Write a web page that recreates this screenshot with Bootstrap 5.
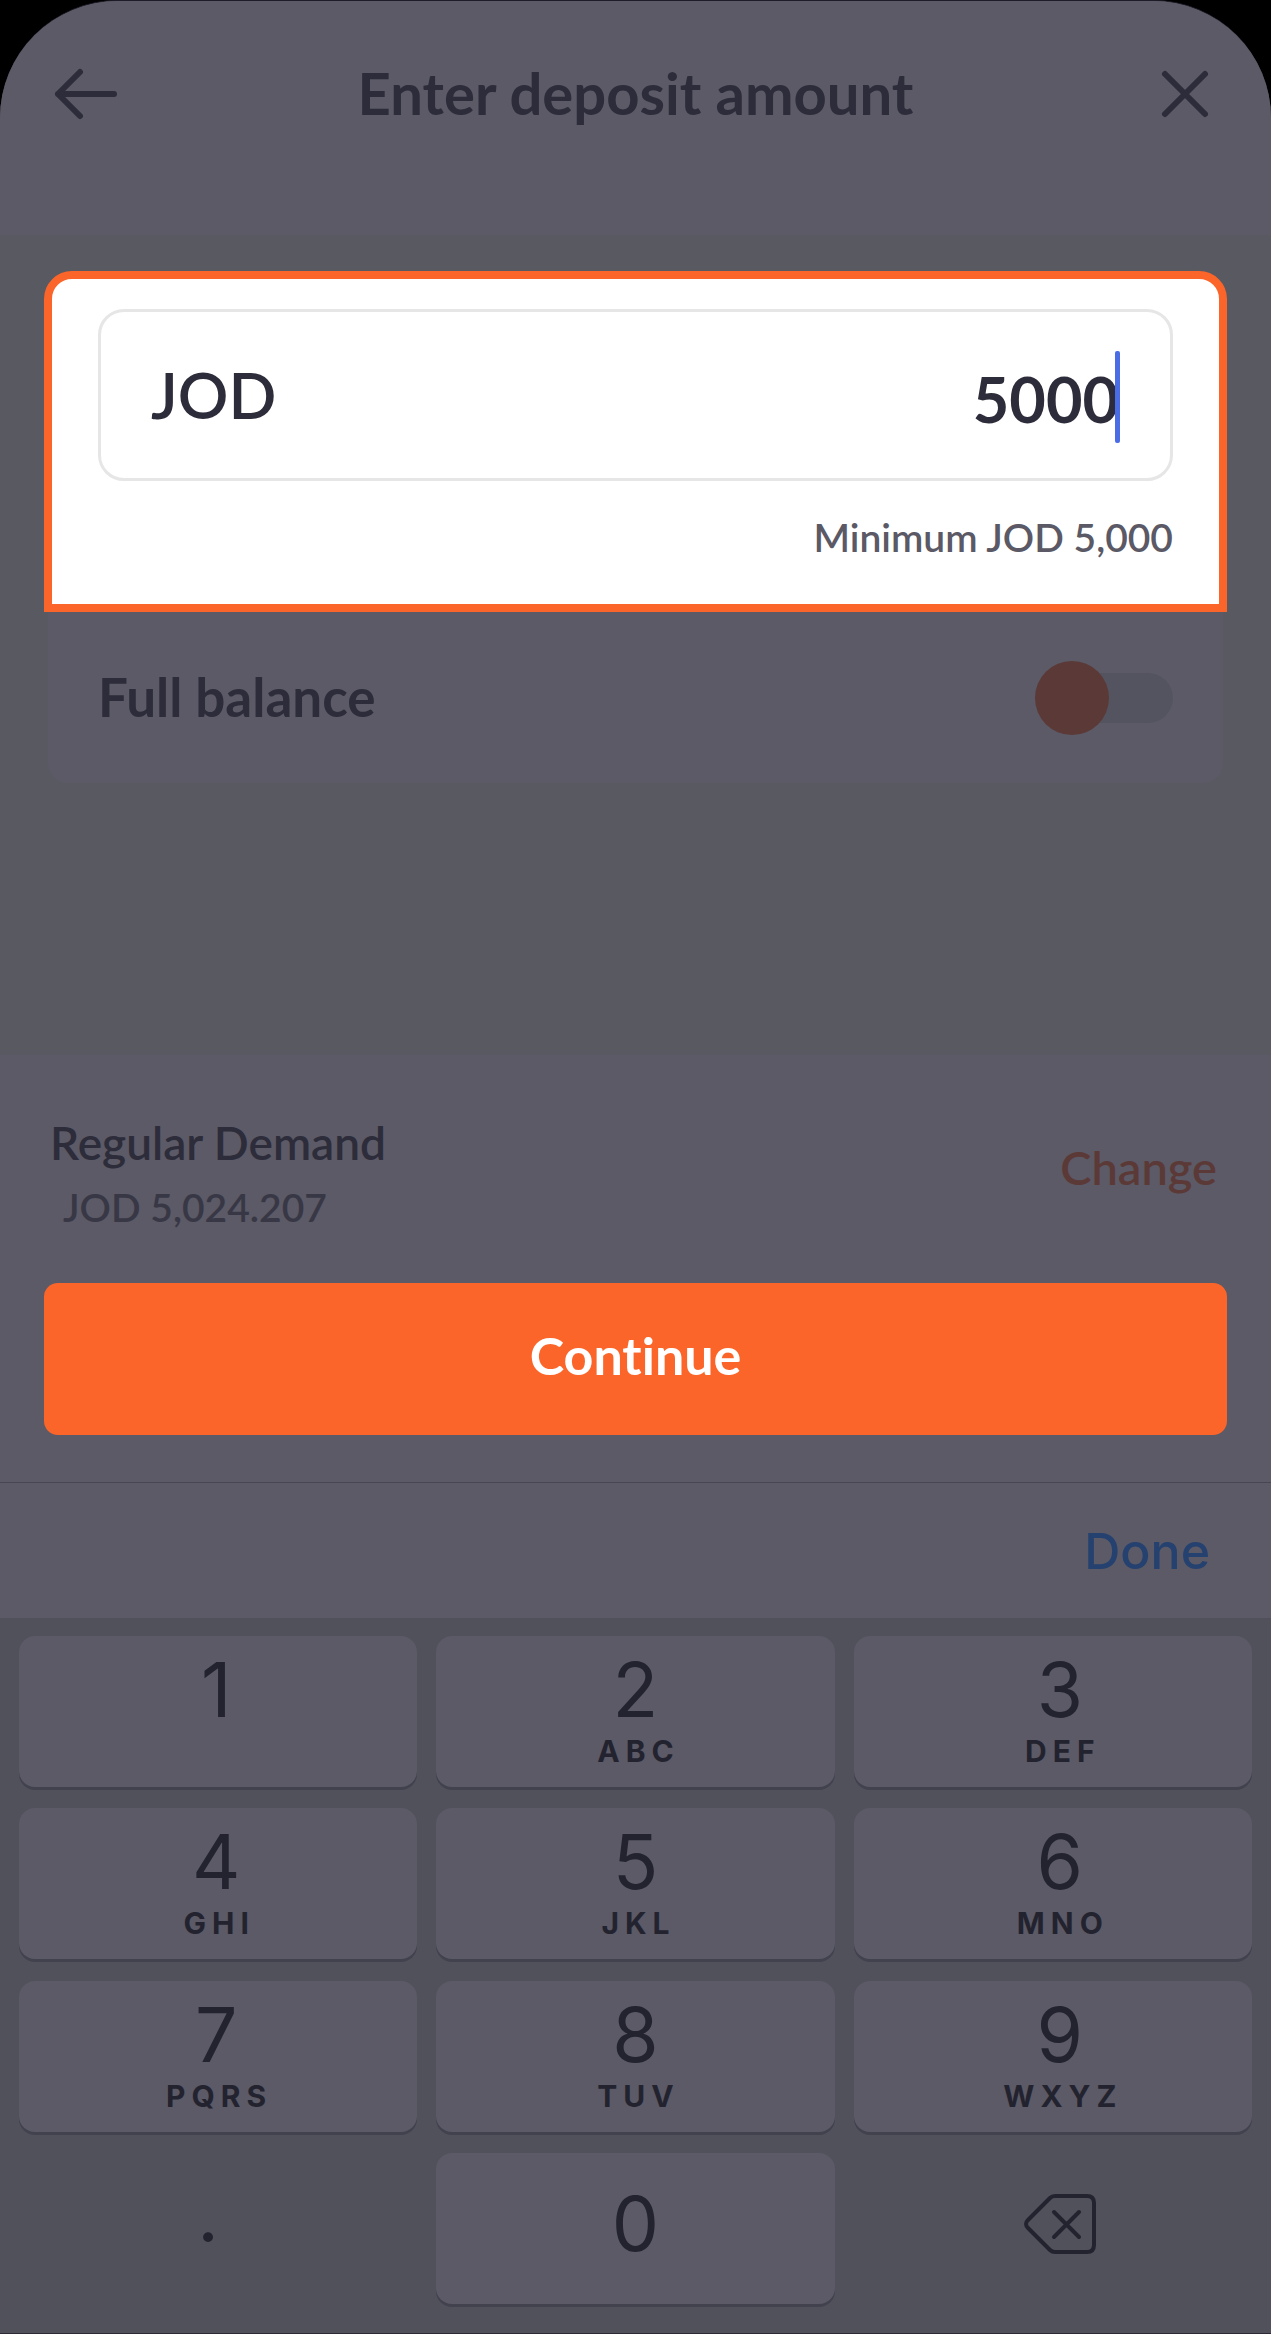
<!DOCTYPE html>
<html lang="en">
<head>
<meta charset="utf-8">
<meta name="viewport" content="width=device-width, initial-scale=1">
<title>Enter deposit amount</title>
<link href="https://cdn.jsdelivr.net/npm/bootstrap@5.3.0/dist/css/bootstrap.min.css" rel="stylesheet">
<style>
  :root {
    --ink: #2d2c3a;
    --panel: #5b5a66;
    --backdrop: #595962;
    --accent: #fc6529;
    --accent-dim: #5b3937;
    --key-ink: #232330;
  }
  body { background: #000; color: var(--ink); font-family: Lato, "Open Sans", sans-serif; font-weight: 600; }
  body, button, input { font-variant-ligatures: none; }
  button, input { font-weight: inherit; }
  .screen { background: var(--backdrop); min-height: 100vh; border-top: 1px solid #1d1c28; border-bottom: 1px solid #2b2a36; border-radius: 118px 118px 0 0; overflow: hidden; }
  .top-bar { background: var(--panel); padding: 60px 54px 110px; }
  .top-title { font-size: 58px; line-height: 64px; font-weight: 700; }
  .icon-btn { width: 64px; height: 64px; color: var(--ink); }
  .icon-btn svg { display: block; }

  .amount-area { padding: 36px 44px 0; }
  .amount-panel { background: #fff; border: 8px solid var(--accent); border-radius: 28px 28px 0 0; padding: 30px 46px 41px; }
  .amount-box { border: 3px solid #e6e6e6; border-radius: 26px; height: 172px; padding: 0 50px; background: #fff; }
  .amount-box label { font-size: 63px; line-height: 80px; }
  .amount-box input { min-width: 0; font-size: 63px; line-height: 80px; height: 92px; color: var(--ink); outline: 0; padding: 6px 0 0; font-weight: 700; }
  .text-caret { width: 5px; height: 92px; margin-left: -4px; margin-top: 3px; border-radius: 2px; background: #4a6de5; z-index: 1; }
  .amount-hint { font-size: 39px; line-height: 48px; color: #5a5965; margin-top: 32px; padding-bottom: 2px; }

  .balance-row { background: var(--panel); border-radius: 0 0 20px 20px; margin: 0 4px; height: 171px; padding: 0 50px; }
  .balance-row label { font-size: 53px; line-height: 60px; font-weight: 700; padding-bottom: 2px; }
  .balance-switch { appearance: none; width: 138px; height: 74px; display: flex; align-items: center; }
  .balance-switch::before { content: ""; width: 74px; height: 74px; border-radius: 50%; background: var(--accent-dim); z-index: 1; }
  .balance-switch::after { content: ""; flex: 1; height: 50px; margin-left: -50px; border-radius: 25px; background: #545460; }

  .confirm-panel { background: var(--panel); margin-top: 272px; padding: 60px 44px 47px; border-bottom: 1px solid #474653; }
  .account-line { padding: 0 10px 0 6px; }
  .account-name { font-size: 46px; line-height: 56px; }
  .account-sum { font-size: 39px; line-height: 56px; color: #383745; padding: 8px 0 0 13px; }
  .change-link { font-size: 47px; line-height: 56px; color: var(--accent-dim); text-decoration: none; padding-bottom: 16px; }
  .continue-btn { --bs-btn-bg: var(--accent); --bs-btn-color: #fff; --bs-btn-border-width: 0; --bs-btn-border-radius: 14px; --bs-btn-hover-bg: #e9571e; --bs-btn-hover-color: #fff; height: 152px; margin-top: 48px; padding: 0 0 8px; font-size: 52px; font-weight: 700; }

  .pad-bar { background: var(--panel); height: 135px; padding: 0 61px; font-family: Inter, Roboto, sans-serif; }
  .done-btn { color: #25416f; font-size: 50px; line-height: 60px; font-weight: 500; }
  .keypad { background: #51515c; grid-template-columns: repeat(3, 1fr); gap: 21px 19px; padding: 18px 19px 29px; font-family: Inter, Roboto, sans-serif; }
  .pad-key { height: 151px; border: 0; border-radius: 16px; background: var(--panel); box-shadow: 0 3px 0 #42414e; color: var(--key-ink); padding: 18px 0 0; display: flex; flex-direction: column; align-items: center; }
  .pad-key:nth-child(3n) { padding-left: 14px; }
  .pad-key:nth-child(3n+1) { padding-right: 4px; }
  .pad-key.plain { background: none; box-shadow: none; }
  .pad-key.solo { justify-content: center; padding-top: 0; padding-bottom: 8px; }
  .pad-key.point { padding-right: 20px; padding-bottom: 26px; }
  .key-digit { font-size: 75px; line-height: 72px; font-weight: 400; }
  .key-letters { font-size: 30px; line-height: 30px; margin-top: 10px; font-weight: 700; letter-spacing: 6px; margin-right: -6px; }
</style>
</head>
<body>
<div class="screen d-flex flex-column">
  <header class="top-bar d-flex justify-content-between align-items-center">
    <button type="button" class="btn p-0 border-0 icon-btn" aria-label="Back">
      <svg width="64" height="64" viewBox="0 0 64 64" fill="none" stroke="currentColor" stroke-width="6" stroke-linecap="round" stroke-linejoin="round"><path d="M60 33H4M26 11L4 33L26 55"/></svg>
    </button>
    <h1 class="top-title m-0">Enter deposit amount</h1>
    <button type="button" class="btn p-0 border-0 icon-btn" aria-label="Close">
      <svg width="64" height="64" viewBox="0 0 64 64" fill="none" stroke="currentColor" stroke-width="6" stroke-linecap="round"><path d="M12 13L52 53M52 13L12 53"/></svg>
    </button>
  </header>

  <main>
    <section class="amount-area">
      <div class="amount-panel">
        <div class="amount-box d-flex align-items-center">
          <label for="amount">JOD</label>
          <input id="amount" class="flex-grow-1 border-0 bg-transparent text-end" type="text" inputmode="decimal" value="5000" aria-describedby="hint">
          <span class="text-caret"></span>
        </div>
        <p id="hint" class="amount-hint text-end mb-0">Minimum JOD 5,000</p>
      </div>
      <div class="balance-row d-flex align-items-center justify-content-between">
        <label for="full">Full balance</label>
        <input id="full" class="balance-switch m-0" type="checkbox" role="switch">
      </div>
    </section>

    <section class="confirm-panel">
      <div class="account-line d-flex align-items-center justify-content-between">
        <div>
          <div class="account-name">Regular Demand</div>
          <div class="account-sum">JOD 5,024.207</div>
        </div>
        <a class="change-link" href="#">Change</a>
      </div>
      <button type="button" class="btn continue-btn w-100">Continue</button>
    </section>
  </main>

  <div class="pad-bar d-flex align-items-center justify-content-end">
    <button type="button" class="btn p-0 border-0 done-btn">Done</button>
  </div>
  <div class="keypad d-grid flex-grow-1">
    <button type="button" class="pad-key"><span class="key-digit">1</span></button>
    <button type="button" class="pad-key"><span class="key-digit">2</span><span class="key-letters">ABC</span></button>
    <button type="button" class="pad-key"><span class="key-digit">3</span><span class="key-letters">DEF</span></button>
    <button type="button" class="pad-key"><span class="key-digit">4</span><span class="key-letters">GHI</span></button>
    <button type="button" class="pad-key"><span class="key-digit">5</span><span class="key-letters">JKL</span></button>
    <button type="button" class="pad-key"><span class="key-digit">6</span><span class="key-letters">MNO</span></button>
    <button type="button" class="pad-key"><span class="key-digit">7</span><span class="key-letters">PQRS</span></button>
    <button type="button" class="pad-key"><span class="key-digit">8</span><span class="key-letters">TUV</span></button>
    <button type="button" class="pad-key"><span class="key-digit">9</span><span class="key-letters">WXYZ</span></button>
    <button type="button" class="pad-key plain solo point"><span class="key-digit">.</span></button>
    <button type="button" class="pad-key solo"><span class="key-digit">0</span></button>
    <button type="button" class="pad-key plain solo" aria-label="Delete">
      <svg width="72" height="60" viewBox="0 0 72 60" fill="none" stroke="currentColor" stroke-width="4" stroke-linecap="round" stroke-linejoin="round"><path d="M31 2H63Q70 2 70 9V51Q70 58 63 58H31Q28 58 26 56L4 34Q0 30 4 26L26 4Q28 2 31 2ZM30 18L55 43M55 18L30 43"/></svg>
    </button>
  </div>
</div>
<script src="https://cdn.jsdelivr.net/npm/bootstrap@5.3.0/dist/js/bootstrap.bundle.min.js"></script>
</body>
</html>
